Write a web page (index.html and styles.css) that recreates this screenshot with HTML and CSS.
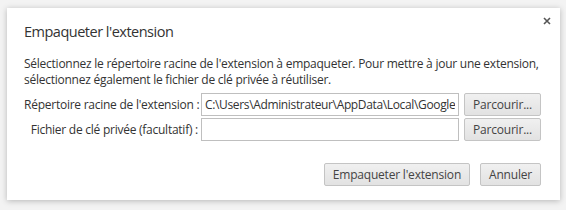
FILE: index.html
```html
<!DOCTYPE html>
<html>
<head>
  <title>Empaqueter l'extension</title>
  <link rel="stylesheet" href="styles.css">
</head>
<body>
  <div class="dialog">
    <svg class="close" width="8" height="8" viewBox="0 0 8 8">
      <path d="M1 1 L7 7 M7 1 L1 7" stroke="#555" stroke-width="1.6" fill="none"/>
    </svg>
    <h1 class="title">Empaqueter l'extension</h1>
    <p class="intro">Sélectionnez le répertoire racine de l'extension à empaqueter. Pour mettre à jour une extension, sélectionnez également le fichier de clé privée à réutiliser.</p>

    <div class="row">
      <label class="label">Répertoire racine de l'extension :</label>
      <input type="text" class="field" value="C:\Users\Administrateur\AppData\Local\Google\Chrome">
      <button class="btn">Parcourir...</button>
    </div>
    <div class="row">
      <label class="label">Fichier de clé privée (facultatif) :</label>
      <input type="text" class="field">
      <button class="btn">Parcourir...</button>
    </div>

    <div class="actions">
      <button class="btn">Empaqueter l'extension</button>
      <button class="btn">Annuler</button>
    </div>
  </div>
</body>
</html>
```

FILE: styles.css
```css
body {
  margin: 0;
  padding: 8px 6px 10px 7px;
  background-color: #f3f3f3;
  font-family: "Open Sans", "Noto Sans", sans-serif;
  font-size: 12px;
  color: #333;
}

.dialog {
  position: relative;
  width: 553px;
  height: 192px;
  box-sizing: border-box;
  padding: 13px 19px 0 17px;
  background-color: #fff;
  box-shadow: 0 1px 6px rgba(0, 0, 0, 0.25);
}

.close {
  position: absolute;
  top: 9px;
  right: 9px;
}

.title {
  margin: 0;
  font-size: 14.5px;
  font-weight: normal;
  line-height: 22px;
  letter-spacing: -0.5px;
  color: #333;
}

.intro {
  margin: 13px -15px 5px 0;
  line-height: 16px;
  letter-spacing: -0.25px;
}

.row {
  display: flex;
  align-items: center;
  margin-top: 2px;
}

.label {
  width: 174px;
  text-align: right;
  padding-right: 3px;
  letter-spacing: -0.25px;
  white-space: nowrap;
}

.field {
  flex: 1;
  height: 23px;
  box-sizing: border-box;
  margin: 0 5px 0 0;
  padding: 0 3px;
  border: 1px solid #bfbfbf;
  font-family: inherit;
  font-size: 12px;
  letter-spacing: -0.35px;
  color: #333;
}

.btn {
  height: 23px;
  padding: 0 8px;
  border: 1px solid #c4c4c4;
  border-radius: 2px;
  background: linear-gradient(#f0f0f0, #e2e2e2);
  font-family: inherit;
  font-size: 12px;
  color: #444;
  letter-spacing: -0.2px;
}

.actions {
  display: flex;
  justify-content: flex-end;
  gap: 10px;
  margin-top: 22px;
}

.actions .btn {
  padding: 0 8px;
}
```
